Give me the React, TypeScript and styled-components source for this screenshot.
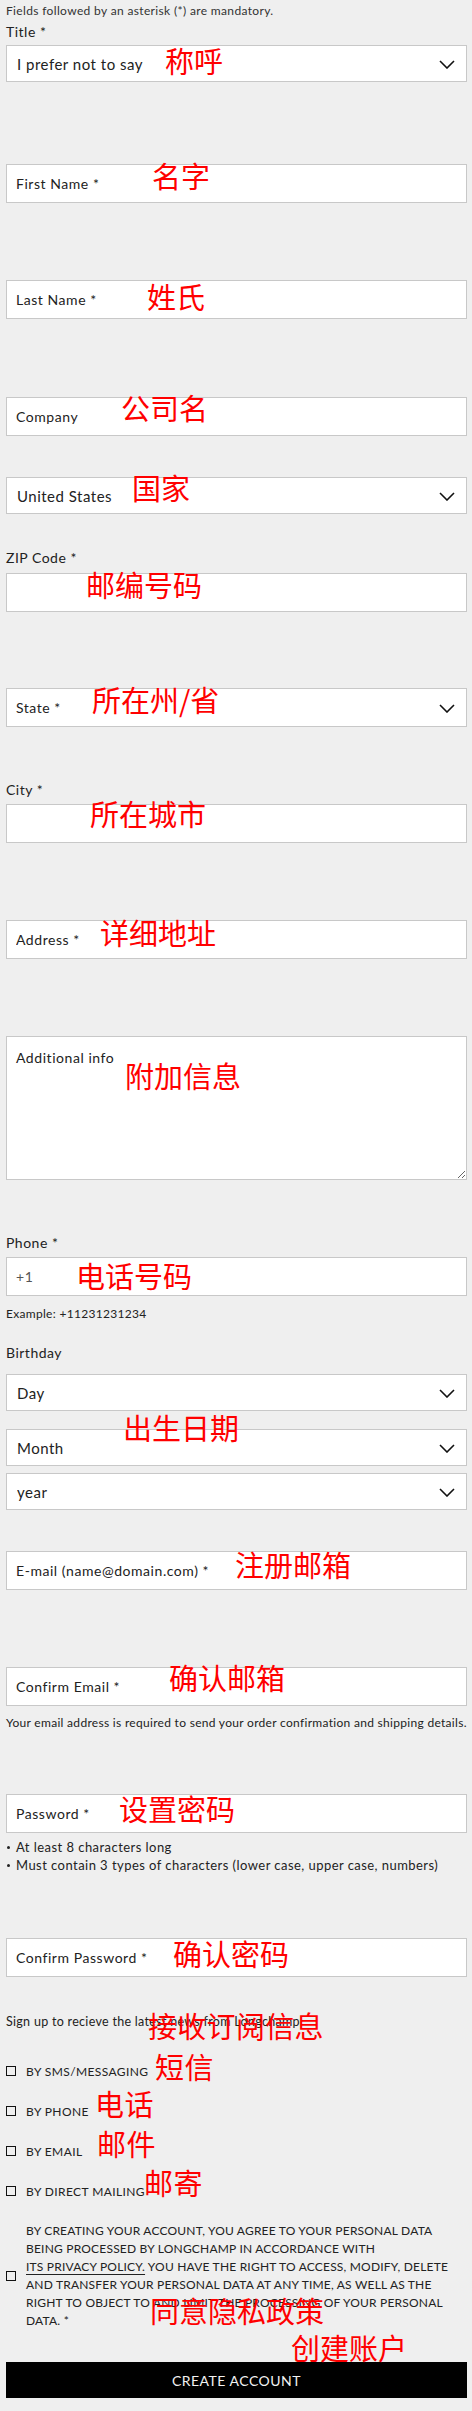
import React from 'react';
import styled, { createGlobalStyle } from 'styled-components';

const GlobalStyle = createGlobalStyle`
  html, body {
    margin: 0;
    padding: 0;
    background: #efefef;
  }

  body {
    font-family: Lato, 'Noto Sans', sans-serif;
    color: #222;
  }

  * {
    box-sizing: border-box;
  }
`;

type Spaced = { $mt?: number };

const Page = styled.form`
  display: flex;
  flex-direction: column;
  width: 472px;
  padding: 3px 5px 12px 6px;
`;

const Intro = styled.p`
  margin: 0;
  font-size: 12px;
  line-height: 16px;
  letter-spacing: 0.35px;
  color: #333;
`;

const FieldLabel = styled.label<Spaced>`
  display: block;
  margin-top: ${({ $mt = 0 }) => $mt}px;
  font-size: 14px;
  line-height: 20px;
  letter-spacing: 0.5px;
  color: #222;
`;

const Field = styled.div<Spaced>`
  position: relative;
  margin-top: ${({ $mt = 0 }) => $mt}px;
`;

const TextInput = styled.input<{ $muted?: boolean }>`
  display: block;
  width: 100%;
  height: 39px;
  margin: 0;
  padding: 0 9px;
  border: 1px solid #c8c8c8;
  border-radius: 0;
  background: #fff;
  font-family: Lato, 'Noto Sans', sans-serif;
  font-size: 14px;
  letter-spacing: 0.55px;
  outline: none;

  &::placeholder {
    color: ${({ $muted }) => ($muted ? '#555' : '#222')};
    opacity: 1;
  }
`;

const Select = styled.select<{ $h?: number }>`
  display: block;
  width: 100%;
  height: ${({ $h = 37 }) => $h}px;
  margin: 0;
  padding: 0 40px 0 ${({ $h = 37 }) => ($h > 37 ? 9 : 10)}px;
  border: 1px solid #c8c8c8;
  border-radius: 0;
  background: #fff;
  appearance: none;
  -webkit-appearance: none;
  font-family: Lato, 'Noto Sans', sans-serif;
  font-size: ${({ $h = 37 }) => ($h > 37 ? 14 : 15)}px;
  letter-spacing: 0.5px;
  color: #222;
  outline: none;
`;

const ChevronIcon = styled.svg`
  position: absolute;
  right: 12px;
  top: 50%;
  margin-top: -4px;
  pointer-events: none;
`;

const TextArea = styled.textarea`
  display: block;
  width: 100%;
  height: 144px;
  margin: 0;
  padding: 12px 9px;
  border: 1px solid #c8c8c8;
  border-radius: 0;
  background: #fff;
  font-family: Lato, 'Noto Sans', sans-serif;
  font-size: 14px;
  letter-spacing: 0.55px;
  outline: none;

  &::placeholder {
    color: #222;
    opacity: 1;
  }
`;

const Hint = styled.p<Spaced>`
  margin: ${({ $mt = 0 }) => $mt}px 0 0;
  font-size: 12px;
  line-height: 16px;
  letter-spacing: 0.3px;
  color: #222;
`;

const Rules = styled.ul<Spaced>`
  margin: ${({ $mt = 0 }) => $mt}px 0 0;
  padding: 0;
  list-style: none;

  li {
    position: relative;
    padding-left: 10px;
    font-size: 13px;
    line-height: 18px;
    letter-spacing: 0.45px;
    color: #222;
  }

  li::before {
    content: '';
    position: absolute;
    left: 1px;
    top: 8px;
    width: 3px;
    height: 3px;
    border-radius: 50%;
    background: #222;
  }
`;

const SignUp = styled.p<Spaced>`
  position: relative;
  margin: ${({ $mt = 0 }) => $mt}px 0 0;
  font-size: 12.5px;
  line-height: 16px;
  letter-spacing: 0.3px;
  color: #222;
`;

const OptRow = styled.label<Spaced>`
  position: relative;
  display: flex;
  align-items: center;
  gap: 10px;
  height: 20px;
  margin-top: ${({ $mt = 0 }) => $mt}px;
  font-size: 12px;
  letter-spacing: 0.4px;
  text-transform: uppercase;
  color: #222;
`;

const Check = styled.span`
  flex: none;
  width: 10px;
  height: 10px;
  border: 1.5px solid #111;
  background: transparent;
`;

const Consent = styled.label<Spaced>`
  position: relative;
  display: flex;
  align-items: center;
  gap: 10px;
  margin-top: ${({ $mt = 0 }) => $mt}px;
`;

const ConsentText = styled.p`
  margin: 0;
  font-size: 12px;
  line-height: 18px;
  letter-spacing: 0.2px;
  text-transform: uppercase;
  white-space: nowrap;
  color: #222;
`;

const Policy = styled.a`
  color: inherit;
  text-decoration: underline;
  text-decoration-thickness: 1px;
  text-underline-offset: 3px;
`;

const SubmitButton = styled.button`
  display: block;
  width: 100%;
  height: 36px;
  margin: 0;
  border: 0;
  border-radius: 0;
  background: #000;
  font-family: Lato, 'Noto Sans', sans-serif;
  font-size: 14px;
  letter-spacing: 0.5px;
  color: #f2f2f2;
  text-transform: uppercase;
`;

// red annotations written over the screenshot
const Note = styled.span<{ $x: number; $y: number }>`
  position: absolute;
  left: ${({ $x }) => $x}px;
  top: ${({ $y }) => $y}px;
  font-family: 'Noto Sans CJK SC', sans-serif;
  font-size: 29px;
  line-height: 1;
  color: #ff0000;
  white-space: nowrap;
  pointer-events: none;
  z-index: 2;
`;

const Chevron: React.FC = () => (
  <ChevronIcon width="16" height="9" viewBox="0 0 16 9" aria-hidden="true">
    <path d="M1 1l7 7 7-7" fill="none" stroke="#111" strokeWidth="1.6" />
  </ChevronIcon>
);

type DropProps = { mt?: number; h?: number; value: string; note?: string; x?: number; y?: number };

const Drop: React.FC<DropProps> = ({ mt, h, value, note, x = 0, y = 0 }) => (
  <Field $mt={mt}>
    <Select $h={h} defaultValue={value}>
      <option>{value}</option>
    </Select>
    <Chevron />
    {note && <Note $x={x} $y={y}>{note}</Note>}
  </Field>
);

type TextProps = { mt?: number; placeholder: string; muted?: boolean; note: string; x: number; y: number };

const Text: React.FC<TextProps> = ({ mt, placeholder, muted, note, x, y }) => (
  <Field $mt={mt}>
    <TextInput placeholder={placeholder} $muted={muted} />
    <Note $x={x} $y={y}>{note}</Note>
  </Field>
);

const options = [
  { label: 'By SMS/Messaging', note: '短信', x: 149, y: -9 },
  { label: 'By Phone', note: '电话', x: 89, y: -12 },
  { label: 'By Email', note: '邮件', x: 91, y: -12 },
  { label: 'By Direct Mailing', note: '邮寄', x: 138, y: -13 },
];

const App: React.FC = () => (
  <>
    <GlobalStyle />
    <Page onSubmit={(e) => e.preventDefault()}>
      <Intro>Fields followed by an asterisk (*) are mandatory.</Intro>

      <FieldLabel $mt={3}>Title *</FieldLabel>
      <Drop mt={3} value="I prefer not to say" note="称呼" x={159} y={1} />

      <Text mt={82} placeholder="First Name *" note="名字" x={146} y={-3} />
      <Text mt={77} placeholder="Last Name *" note="姓氏" x={141} y={2} />
      <Text mt={78} placeholder="Company" note="公司名" x={115} y={-4} />

      <Drop mt={41} value="United States" note="国家" x={126} y={-4} />

      <FieldLabel $mt={34}>ZIP Code *</FieldLabel>
      <Text mt={5} placeholder="" note="邮编号码" x={80} y={-3} />

      <Drop mt={76} h={39} value="State *" note="所在州/省" x={86} y={-3} />

      <FieldLabel $mt={53}>City *</FieldLabel>
      <Text mt={4} placeholder="" note="所在城市" x={84} y={-5} />

      <Text mt={77} placeholder="Address *" note="详细地址" x={94} y={-2} />

      <Field $mt={77}>
        <TextArea placeholder="Additional info" />
        <Note $x={119} $y={25}>附加信息</Note>
      </Field>

      <FieldLabel $mt={53}>Phone *</FieldLabel>
      <Text mt={4} placeholder="+1" muted note="电话号码" x={70} y={4} />
      <Hint $mt={10}>Example: +11231231234</Hint>

      <FieldLabel $mt={21}>Birthday</FieldLabel>
      <Drop mt={11} value="Day" />
      <Drop mt={18} value="Month" note="出生日期" x={117} y={-16} />
      <Drop mt={7} value="year" />

      <Text mt={41} placeholder="E-mail (name@domain.com) *" note="注册邮箱" x={229} y={-1} />
      <Text mt={77} placeholder="Confirm Email *" note="确认邮箱" x={163} y={-4} />
      <Hint $mt={9}>Your email address is required to send your order confirmation and shipping details.</Hint>

      <Text mt={63} placeholder="Password *" note="设置密码" x={113} y={0} />
      <Rules $mt={5}>
        <li>At least 8 characters long</li>
        <li>Must contain 3 types of characters (lower case, upper case, numbers)</li>
      </Rules>

      <Text mt={64} placeholder="Confirm Password *" note="确认密码" x={167} y={1} />

      <SignUp $mt={37}>
        Sign up to recieve the latest news from Longchamp
        <Note $x={142} $y={-3}>接收订阅信息</Note>
      </SignUp>

      {options.map((o, i) => (
        <OptRow key={o.label} $mt={i === 0 ? 31 : 20}>
          <Check />
          {o.label}
          <Note $x={o.x} $y={o.y}>{o.note}</Note>
        </OptRow>
      ))}

      <Consent $mt={21}>
        <Check />
        <ConsentText>
          By creating your account, you agree to your personal data
          <br />
          being processed by Longchamp in accordance with
          <br />
          <Policy href="#privacy">Its privacy policy.</Policy> You have the right to access, modify, delete
          <br />
          and transfer your personal data at any time, as well as the
          <br />
          right to object to and limit the processing of your personal
          <br />
          data. *
        </ConsentText>
        <Note $x={144} $y={74}>同意隐私政策</Note>
      </Consent>

      <Field $mt={32}>
        <SubmitButton type="submit">Create Account</SubmitButton>
        <Note $x={285} $y={-29}>创建账户</Note>
      </Field>
    </Page>
  </>
);

export default App;
